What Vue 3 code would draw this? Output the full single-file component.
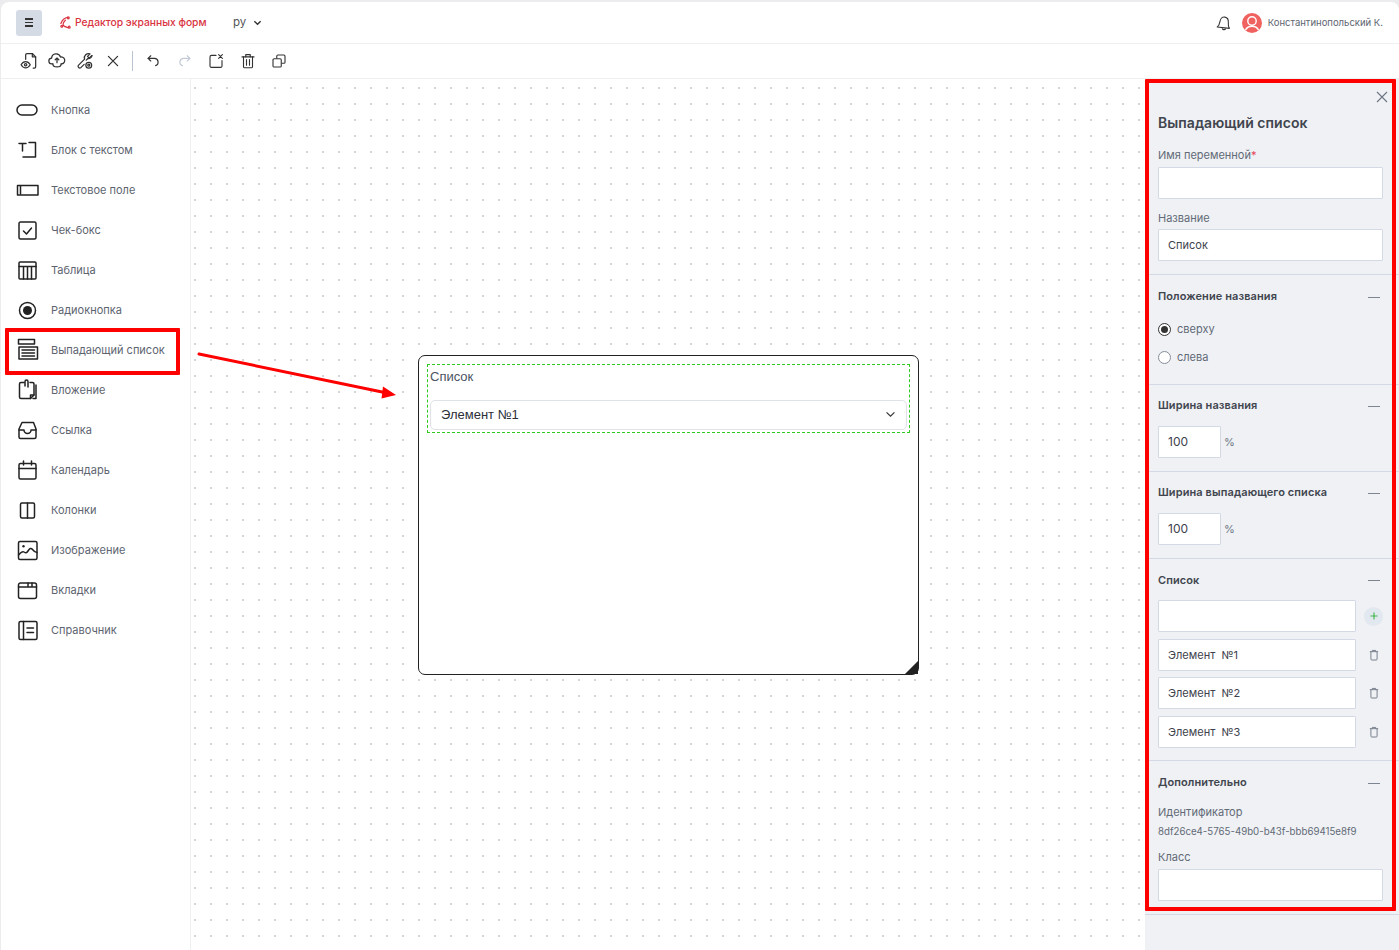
<script setup>
const tools = [
  { k: 'a', paths: ['M8 10V4.500a1.500 1.500 0 0 1 1.500-1.500H16l4 4v12a1.500 1.500 0 0 1-1.500 1.500H17', 'M16 3v4h4', 'M2.500 16.500c1.500-2.600 3.500-3.800 5.500-3.800s4 1.200 5.500 3.800c-1.500 2.600-3.500 3.800-5.500 3.800s-4-1.200-5.500-3.800z', 'M8 15.100a1.400 1.400 0 1 0 0 2.800 1.400 1.400 0 0 0 0-2.800z'] },
  { k: 'b', paths: ['M7 15.500H6a3.500 3.500 0 0 1-.5-7 5.500 5.500 0 0 1 10.700-1.200A4 4 0 0 1 18 15.500h-1', 'M12 14V8.500M9.800 10.500 12 8.500l2.200 2', 'M7 15.500c0 2 2 3.500 5 3.500s5-1.500 5-3.500'] },
  { k: 'c', paths: ['M20 5.500 17 8.500l-2-2 3-3a5 5 0 0 0-6.500 6.200L4 17.200A2.100 2.100 0 0 0 7 20l4-4', 'M13.500 11l2-2a5 5 0 0 0 5-3.500', 'M16.500 13.500a3.500 3.500 0 1 0 0 7 3.500 3.500 0 0 0 0-7z', 'M16.500 15.800a1.200 1.200 0 1 0 0 2.400 1.200 1.200 0 0 0 0-2.400z'] },
  { k: 'd', paths: ['M6.500 6.500l11 11M17.500 6.500l-11 11'] },
];
const tools2 = [
  { k: 'e', c: '', paths: ['M9 5 5.500 8.500 9 12', 'M5.500 8.500H14a5 5 0 0 1 1.500 9.700'] },
  { k: 'f', c: 'dim', paths: ['M15 5l3.500 3.500L15 12', 'M18.500 8.500H10a5 5 0 0 0-1.500 9.700'] },
  { k: 'g', c: '', paths: ['M12 4.500H6A2 2 0 0 0 4 6.500v12a2 2 0 0 0 2 2h12a2 2 0 0 0 2-2v-7', 'M15.500 3.500l5 5M20.500 3.500l-5 5'] },
  { k: 'h', c: '', paths: ['M4 6.500h16', 'M9 6.500V3.500h6v3', 'M6 6.500v13a1.500 1.500 0 0 0 1.500 1.500h9a1.500 1.500 0 0 0 1.500-1.500v-13', 'M10 10v7.500M14 10v7.500'] },
  { k: 'i', c: '', paths: ['M9 8V5.500A1.500 1.500 0 0 1 10.500 4h8A1.500 1.500 0 0 1 20 5.500v8a1.500 1.500 0 0 1-1.500 1.500H16', 'M5.500 9h8A1.500 1.500 0 0 1 15 10.500v8a1.500 1.500 0 0 1-1.500 1.500h-8A1.500 1.500 0 0 1 4 18.500v-8A1.500 1.500 0 0 1 5.500 9z'] },
];
const items = [
  { t: 'Кнопка', p: ['M7 7h10a5 5 0 0 1 0 10H7A5 5 0 0 1 7 7z'] },
  { t: 'Блок с текстом', p: ['M4 5.500h7M7.500 5.500V13', 'M14 4.500h6.500v14.500H8'] },
  { t: 'Текстовое поле', p: ['M3.500 7.500h19.500v9.500H2.500V7.500z', 'M5.500 8v8'] },
  { t: 'Чек-бокс', p: ['M5.500 4h14A1.500 1.500 0 0 1 21 5.500v14a1.500 1.500 0 0 1-1.500 1.500h-14A1.500 1.500 0 0 1 4 19.500v-14A1.500 1.500 0 0 1 5.500 4z', 'M8.500 13l3 3 5-6'] },
  { t: 'Таблица', p: ['M5 4h15A1 1 0 0 1 21 5v15a1 1 0 0 1-1 1H5a1 1 0 0 1-1-1V5a1 1 0 0 1 1-1z', 'M4 8.500h17M8.500 8.500V21M12.500 8.500V21M16.500 8.500V21'] },
  { t: 'Радиокнопка', p: ['M12.500 4.500a8 8 0 1 0 0 16 8 8 0 0 0 0-16z'], fill: ['M12.500 8a4.500 4.500 0 1 0 0 9 4.500 4.500 0 0 0 0-9z'] },
  { t: 'Выпадающий список', p: ['M3.500 1.500h16v4.500h-16z', 'M4 9h18.500v12H4z', 'M7 12h12.500M7 15h12.500M7 18h12.500'] },
  { t: 'Вложение', p: ['M9 4.500H6A1.500 1.500 0 0 0 4.500 6v13A1.500 1.500 0 0 0 6 20.500h9.500l3.500-3.500V6A1.500 1.500 0 0 0 17.500 4.500H15', 'M15.500 20.500V17H19', 'M10 8V3.500a1.500 1.500 0 0 1 3 0V9', 'M21 7v13.500h-3'] },
  { t: 'Ссылка', p: ['M7 4.500h11.500L21 11v8a1.500 1.500 0 0 1-1.500 1.500h-14A1.500 1.500 0 0 1 4 19v-8z', 'M4 12h5a3.500 3.500 0 0 0 7 0h5'] },
  { t: 'Календарь', p: ['M5.500 5.500h14A1.500 1.500 0 0 1 21 7v12.500a1.500 1.500 0 0 1-1.500 1.500h-14A1.500 1.500 0 0 1 4 19.500V7a1.500 1.500 0 0 1 1.500-1.500z', 'M4 10.500h17M8.500 3v4M16.500 3v4'] },
  { t: 'Колонки', p: ['M7 5h11a1.500 1.500 0 0 1 1.500 1.500v12A1.500 1.500 0 0 1 18 20H7a1.500 1.500 0 0 1-1.500-1.500v-12A1.500 1.500 0 0 1 7 5z', 'M12.500 5v15'] },
  { t: 'Изображение', p: ['M5 3.500h15.500A1.500 1.500 0 0 1 22 5v15a1.500 1.500 0 0 1-1.500 1.500H5A1.500 1.500 0 0 1 3.500 20V5A1.500 1.500 0 0 1 5 3.500z', 'M3.500 17c2.500-3 4-4 5.500-3s2.500 1.500 4-1 3-3.500 4.500-1.500 3 3 4.500 3'], fill: ['M8.500 7a1.200 1.200 0 1 0 0 2.400A1.200 1.200 0 0 0 8.500 7z'] },
  { t: 'Вкладки', p: ['M5.500 5h14A2 2 0 0 1 21.500 7v11.500a2 2 0 0 1-2 2h-14a2 2 0 0 1-2-2V7a2 2 0 0 1 2-2z', 'M3.500 9h18M13 5v4M17 5v4'] },
  { t: 'Справочник', p: ['M5.500 3.500h15A1.500 1.500 0 0 1 22 5v15a1.500 1.500 0 0 1-1.500 1.500h-15A1.500 1.500 0 0 1 4 20V5a1.500 1.500 0 0 1 1.500-1.500z', 'M8.500 3.500v18', 'M12 10h6.500M12 14.500h6.500'] },
];
const listRows = ['Элемент  №1', 'Элемент  №2', 'Элемент  №3'];
</script>

<template>
  <div class="app">
    <header class="top">
      <button class="burger" aria-label="Меню"><span></span><span></span><span></span></button>
      <svg class="logo" viewBox="0 0 14 14" fill="none" stroke="#d9333f" stroke-width="1.300" stroke-linecap="round">
        <path d="M9.500 1.500C6 2 3.500 4 2 8" />
        <path d="M7 4.500C5 6 3.500 9 5 10.500s3 1.500 5 2" />
        <circle cx="10" cy="2" r="1" />
        <circle cx="3" cy="11" r="1" />
        <circle cx="11" cy="12" r="1" />
      </svg>
      <span class="brand">Редактор экранных форм</span>
      <span class="lang">ру</span>
      <svg class="lang-chev" viewBox="0 0 10 6" fill="none" stroke="#333" stroke-width="1.500"><path d="M1.500 1 5 4.500 8.500 1" /></svg>
      <div class="spacer"></div>
      <svg class="bell" viewBox="0 0 20 20" fill="none" stroke="#333" stroke-width="1.200" stroke-linejoin="round">
        <path d="M2.500 14.500c2-1.500 2.500-3 3-6 .5-3 2.500-5.500 5.500-5 3 .5 4 3 3.800 6-.2 2.500 0 4.500 1.200 6.500z" />
        <path d="M8 16c.2 1.500 2.800 2 4 .3" />
      </svg>
      <svg class="avatar" viewBox="0 0 20 20">
        <circle cx="10" cy="10" r="10" fill="#f0625f" />
        <circle cx="10" cy="8" r="4.200" fill="none" stroke="#fff" stroke-width="1.400" />
        <path d="M3.500 17c1.500-3 4-3.800 6.500-3.800s5 .8 6.500 3.800" fill="none" stroke="#fff" stroke-width="1.400" />
      </svg>
      <span class="user">Константинопольский К.</span>
    </header>

    <div class="toolbar">
      <svg v-for="t in tools" :key="t.k" class="tool" viewBox="0 0 24 24">
        <path v-for="d in t.paths" :key="d" :d="d" />
      </svg>
      <span class="sep"></span>
      <svg v-for="t in tools2" :key="t.k" class="tool alt" :class="t.c" viewBox="0 0 24 24">
        <path v-for="d in t.paths" :key="d" :d="d" />
      </svg>
    </div>

    <div class="main">
      <nav class="side">
        <div v-for="it in items" :key="it.t" class="side-item">
          <svg class="side-ico" viewBox="0 0 24 24">
            <path v-for="d in it.p" :key="d" :d="d" />
            <path v-for="d in it.fill || []" :key="d" :d="d" class="solid" />
          </svg>
          <span>{{ it.t }}</span>
        </div>
      </nav>

      <section class="canvas">
        <div class="widget">
          <div class="dashed">
            <div class="w-label">Список</div>
            <div class="w-select">
              <span>Элемент №1</span>
              <svg class="w-chev" viewBox="0 0 12 8" fill="none" stroke="#333" stroke-width="1.300"><path d="M1.500 1.500 6 6l4.500-4.500" /></svg>
            </div>
          </div>
          <i class="grip"></i>
        </div>
      </section>

      <aside class="panel">
        <div class="sec sec-first">
          <svg class="close" viewBox="0 0 12 12" fill="none" stroke="#6e7683" stroke-width="1.100"><path d="M1 1l10 10M11 1 1 11" /></svg>
          <h2>Выпадающий список</h2>
          <label class="lab lab-a">Имя переменной<em>*</em></label>
          <input class="inp" />
          <label class="lab lab-b">Название</label>
          <input class="inp" value="Список" />
        </div>

        <div class="sec sec-pos">
          <div class="head"><h3>Положение названия</h3><i class="minus"></i></div>
          <div class="radio on"><i></i><span>сверху</span></div>
          <div class="radio"><i></i><span>слева</span></div>
        </div>

        <div class="sec sec-w">
          <div class="head"><h3>Ширина названия</h3><i class="minus"></i></div>
          <div class="num"><input class="inp short" value="100" /><span>%</span></div>
        </div>

        <div class="sec sec-w">
          <div class="head"><h3>Ширина выпадающего списка</h3><i class="minus"></i></div>
          <div class="num"><input class="inp short" value="100" /><span>%</span></div>
        </div>

        <div class="sec sec-list">
          <div class="head"><h3>Список</h3><i class="minus"></i></div>
          <div class="row">
            <input class="inp" />
            <span class="plus"><svg viewBox="0 0 10 10" fill="none" stroke="#3fb54a" stroke-width="1.100"><path d="M5 1.500v7M1.500 5h7" /></svg></span>
          </div>
          <div v-for="r in listRows" :key="r" class="row">
            <input class="inp" :value="r" />
            <span class="bin"><svg viewBox="0 0 12 14" fill="none" stroke="#6e7683" stroke-width="1.100"><path d="M1 3h10M4 3V1.500h4V3M2.300 3v9a1 1 0 0 0 1 1h5.400a1 1 0 0 0 1-1V3" /></svg></span>
          </div>
        </div>

        <div class="sec sec-more">
          <div class="head"><h3>Дополнительно</h3><i class="minus"></i></div>
          <label class="lab lab-c">Идентификатор</label>
          <div class="uuid">8df26ce4-5765-49b0-b43f-bbb69415e8f9</div>
          <label class="lab lab-d">Класс</label>
          <input class="inp" />
        </div>
      </aside>

      <div class="mark mark-side"></div>
      <div class="mark mark-panel"></div>
      <svg class="arrow" viewBox="0 0 210 50">
        <path d="M2 3 190 42" stroke="#f00" stroke-width="3" stroke-linecap="round" fill="none" />
        <path d="M199 44 186 35.500 184.500 47.500z" fill="#f00" />
      </svg>
    </div>
  </div>
</template>

<style>
html, body { margin: 0; background: #ececee; }
</style>

<style scoped>
.app {
  position: relative;
  width: 1398px;
  height: 948px;
  margin: 2px 0 0 1px;
  background: #fff;
  border-radius: 8px 8px 0 0;
  overflow: hidden;
  font-family: Inter, "Noto Sans", sans-serif;
  color: #5d6470;
  font-size: 11px;
}
.top {
  height: 42px;
  box-sizing: border-box;
  border-bottom: 1px solid #eeeff1;
  display: flex;
  align-items: center;
  padding-left: 15px;
  padding-right: 16px;
}
.burger {
  width: 26px;
  height: 26px;
  padding: 0;
  border: 0;
  border-radius: 3px;
  background: #d5dbe5;
  display: flex;
  flex-direction: column;
  align-items: center;
  justify-content: center;
  gap: 2px;
}
.burger span { width: 8px; height: 1.500px; background: #333; }
.logo { width: 13px; height: 13px; margin-left: 17px; }
.brand { margin: -1px 0 0 3px; color: #d9333f; font-size: 10.300px; font-weight: 500; width: 144px; white-space: nowrap; }
.lang { margin: -1px 0 0 14px; font-size: 11.500px; color: #555; }
.lang-chev { width: 9px; height: 6px; margin-left: 7px; }
.spacer { flex: 1; }
.bell { width: 18px; height: 18px; }
.avatar { width: 20px; height: 20px; margin-left: 9px; }
.user { margin-left: 6px; font-size: 9.500px; color: #5d6470; white-space: nowrap; }

.toolbar {
  height: 35px;
  box-sizing: border-box;
  border-bottom: 1px solid #eeeff1;
  display: flex;
  align-items: center;
  padding-left: 18px;
  gap: 8px;
}
.tool { width: 20px; height: 20px; fill: none; stroke: #333; stroke-width: 1.500; stroke-linecap: round; stroke-linejoin: round; }
.tool.alt { margin-right: 2.500px; width: 18px; height: 18px; margin-left: 3px; }
.tool.dim { stroke: #c3cad6; }
.sep { width: 1px; height: 20px; background: #b9c2d0; margin: 0 0 0 1px; }

.main { position: relative; display: flex; height: 871px; }
.side {
  width: 190px;
  box-sizing: border-box;
  flex: none;
  border-right: 1px solid #eeeff1;
  padding-top: 11px;
}
.side-item { height: 40px; display: flex; align-items: center; padding-left: 14px; gap: 12px; font-size: 11px; white-space: nowrap; }
.side-ico { width: 24px; height: 24px; flex: none; fill: none; stroke: #222; stroke-width: 1.500; stroke-linejoin: round; stroke-linecap: round; }
.side-ico .solid { fill: #222; stroke: none; }

.canvas {
  flex: 1;
  position: relative;
  background-color: #fff;
  background-image: radial-gradient(circle at 1px 1px, #a4a9b2 0.500px, transparent 0.900px);
  background-size: 16px 16px;
  background-position: 3px 8px;
}
.widget {
  position: absolute;
  left: 227px;
  top: 276px;
  width: 501px;
  height: 320px;
  box-sizing: border-box;
  background: #fff;
  border: 1.500px solid #222;
  border-radius: 7px;
}
.dashed {
  margin: 8px 8px 0 8px;
  height: 69px;
  box-sizing: border-box;
  border-width: 1px;
  border-style: dashed;
  border-color: #2fc921;
  padding: 3px 2px 0 2px;
  font-family: "Liberation Sans", Arial, sans-serif;
  font-size: 13px;
}
.w-label { height: 32px; line-height: 18px; color: #4a5463; }
.w-select {
  height: 30px;
  box-sizing: border-box;
  border: 1px solid #dfe2e7;
  border-radius: 5px;
  display: flex;
  align-items: center;
  justify-content: space-between;
  padding: 0 10px 1px 10px;
  color: #2a2f38;
}
.w-chev { width: 11px; height: 7px; }
.grip {
  position: absolute;
  right: 0;
  bottom: 0;
  width: 13px;
  height: 13px;
  background: #222;
  clip-path: polygon(100% 0, 100% 100%, 0 100%);
}

.panel { width: 254px; flex: none; background: #eff1f5; box-sizing: border-box; }
.sec { position: relative; box-sizing: border-box; padding: 0 13px; border-bottom: 1px solid #d3dae5; }
.sec-first { height: 196px; padding-top: 34px; }
.sec-pos { height: 110px; }
.sec-w { height: 87px; }
.sec-list { height: 202px; }
.sec-more { height: 154px; }
.close { position: absolute; right: 11px; top: 12px; width: 12px; height: 12px; }
h2 { margin: 0; font-size: 14px; line-height: 20px; font-weight: 600; color: #41454e; white-space: nowrap; letter-spacing: .05px; }
.lab { display: block; font-size: 11px; line-height: 14px; color: #626a76; }
.lab em { color: #e5455a; font-style: normal; }
.lab-a { margin-top: 15px; margin-bottom: 5px; }
.lab-b { margin-top: 12px; margin-bottom: 4px; }
.lab-c { margin-top: 2px; }
.lab-d { margin-top: 12px; margin-bottom: 5px; }
.inp {
  display: block;
  width: 225px;
  height: 32px;
  box-sizing: border-box;
  border: 1px solid #d3dae5;
  border-radius: 1px;
  background: #fff;
  padding: 0 9px 1px;
  font: 11px Inter, sans-serif;
  color: #3d424c;
  outline: none;
  white-space: pre;
}
.inp.short { width: 63px; font-size: 12px; }
.head { display: flex; align-items: center; justify-content: space-between; height: 42px; padding-right: 6px; }
h3 { margin: 0; font-size: 11px; font-weight: 600; color: #41454e; white-space: nowrap; letter-spacing: .1px; }
.minus { width: 12px; height: 1px; background: #7d8591; margin-top: 2px; }
.radio { display: flex; align-items: center; gap: 6px; height: 28px; font-size: 11px; color: #626a76; }
.radio i { width: 13px; height: 13px; box-sizing: border-box; border: 1px solid #868d99; border-radius: 50%; background: #fff; position: relative; }
.radio.on i { border-color: #333; }
.radio.on i::after { content: ""; position: absolute; inset: 2px; border-radius: 50%; background: #333; }
.sec-pos .head { margin-bottom: -2px; }
.sec-w .head { height: 40px; margin-bottom: 2px; }
.num { display: flex; align-items: center; gap: 3px; font-size: 11px; color: #6e7683; margin-top: -1px; }
.row { display: flex; align-items: center; margin-bottom: 7px; }
.row:nth-child(3) { margin-bottom: 6px; }
.row .inp { width: 198px; }
.sec-list .head { height: 41px; }
.plus { width: 19px; height: 19px; margin-left: 8px; border-radius: 50%; background: #e2e8ef; display: flex; align-items: center; justify-content: center; }
.plus svg { width: 10px; height: 10px; }
.bin { width: 19px; margin-left: 8px; display: flex; justify-content: center; }
.bin svg { width: 10px; height: 12px; }
.uuid { margin-top: 6px; font-size: 9.700px; line-height: 13px; color: #626a76; white-space: nowrap; }

.mark { position: absolute; box-sizing: border-box; border: 4px solid #f00; border-radius: 1px; pointer-events: none; }
.mark-side { left: 4px; top: 249px; width: 175px; height: 47px; }
.mark-panel { left: 1144px; top: 0; width: 251px; height: 832px; }
.arrow { position: absolute; left: 196px; top: 272px; width: 210px; height: 50px; pointer-events: none; }
</style>
